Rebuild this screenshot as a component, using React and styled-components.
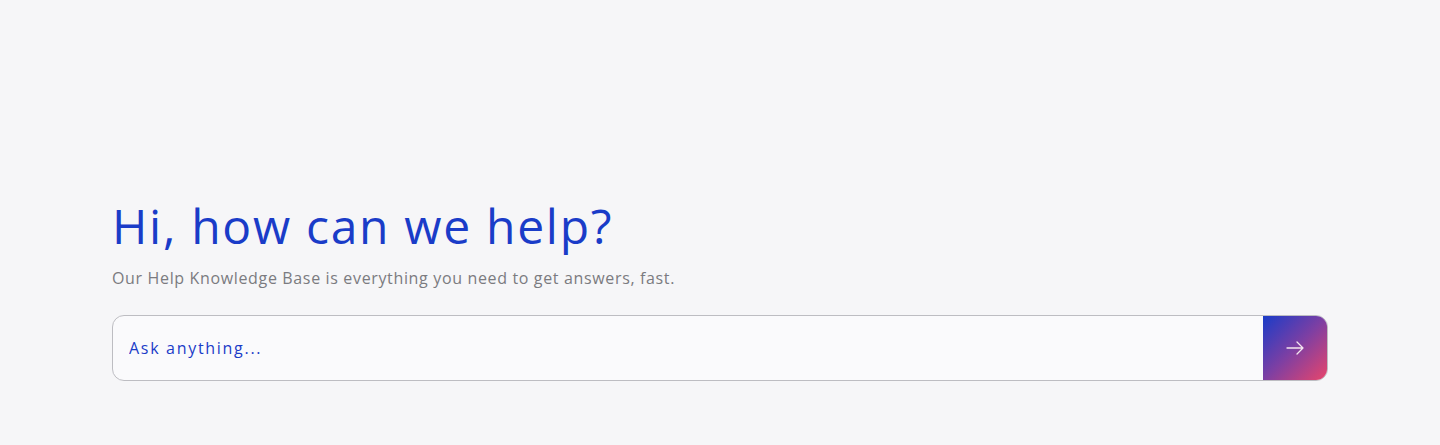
import styled, { createGlobalStyle } from "styled-components";

const GlobalStyle = createGlobalStyle`
  body {
    margin: 0;
    background: #f6f6f8;
    font-family: "Open Sans", "Noto Sans", sans-serif;
  }
`;

const Hero = styled.section`
  height: 445px;
  box-sizing: border-box;
  padding: 194px 112px 0;
`;

const Title = styled.h1`
  margin: 0;
  font-size: 48px;
  font-weight: 400;
  line-height: 64px;
  letter-spacing: 1.7px;
  color: #1a3cc8;
`;

const Subtitle = styled.p`
  margin: 8px 0 0;
  font-size: 16px;
  line-height: 24px;
  letter-spacing: 0.65px;
  color: #7b7b80;
`;

const SearchForm = styled.form`
  display: flex;
  margin-top: 25px;
  height: 66px;
  border: 1px solid #bdbdc2;
  border-radius: 12px;
  background: #fafafc;
  overflow: hidden;
  box-sizing: border-box;
`;

const SearchInput = styled.input`
  flex: 1;
  border: 0;
  outline: none;
  background: transparent;
  padding: 0 16px;
  font-family: inherit;
  font-size: 16px;
  letter-spacing: 1.7px;
  color: #1a3cc8;

  &::placeholder {
    color: #1a3cc8;
    opacity: 1;
  }
`;

const SubmitButton = styled.button`
  width: 64px;
  border: 0;
  padding: 0;
  display: flex;
  align-items: center;
  justify-content: center;
  background: linear-gradient(135deg, #1a3cc8 0%, #7d3fa3 50%, #e8456b 100%);
  cursor: pointer;
`;

const App = () => (
  <>
    <GlobalStyle />
    <Hero>
      <Title>Hi, how can we help?</Title>
      <Subtitle>Our Help Knowledge Base is everything you need to get answers, fast.</Subtitle>
      <SearchForm onSubmit={e => e.preventDefault()}>
        <SearchInput placeholder="Ask anything..." />
        <SubmitButton type="submit" aria-label="Search">
          <svg width="20" height="20" viewBox="0 0 20 20" fill="none" stroke="#f4e6f0" strokeWidth="1.3" strokeLinecap="round" strokeLinejoin="round">
            <path d="M2 10h16M12 4l6 6-6 6" />
          </svg>
        </SubmitButton>
      </SearchForm>
    </Hero>
  </>
);

export default App;
